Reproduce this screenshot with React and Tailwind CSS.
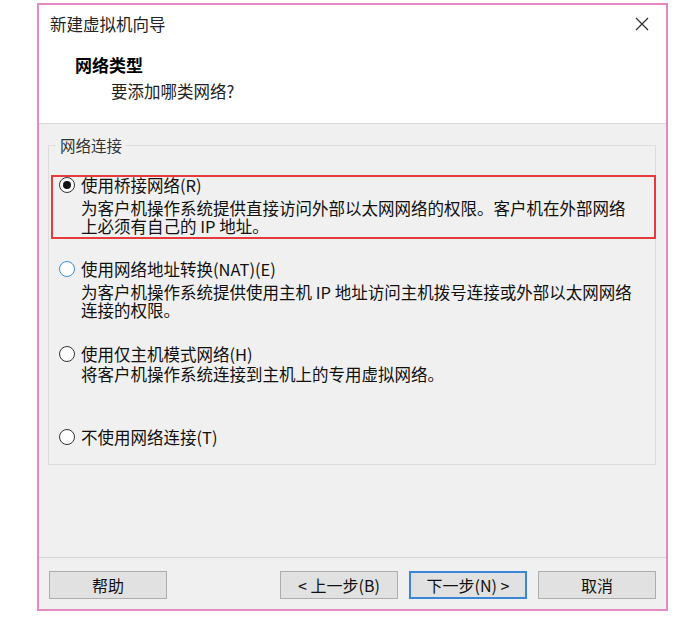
import React from 'react'

function Radio({ checked, focus }) {
  return (
    <span
      className={`flex h-[16px] w-[16px] min-w-[16px] shrink-0 items-center justify-center rounded-full bg-white ${focus ? 'border-[1.5px] border-[#3b8de0]' : 'border-[1.5px] border-[#333]'}`}
    >
      {checked && <span className="h-[8px] w-[8px] rounded-full bg-[#111]" />}
    </span>
  )
}

function Button({ children, primary }) {
  return (
    <button
      className={`h-[28px] w-[118px] bg-[#e1e1e1] text-[16px] leading-[20px] text-[#111] ${primary ? 'border-2 border-[#3c86d8]' : 'border border-[#adadad]'}`}
    >
      {children}
    </button>
  )
}

export default function App() {
  return (
    <div className="min-h-[617px] bg-white pl-[37px] pt-[3px] font-['Noto_Sans_CJK_SC',sans-serif] text-[#111]">
      <div className="flex h-[608px] w-[631px] flex-col border-2 border-[#e38ac5] bg-[#f0f0f0]">
        {/* header */}
        <div className="h-[119px] border-b border-[#dadada] bg-white">
          <div className="box-content flex h-[20px] items-center justify-between pl-[11px] pr-[17px] pt-[9px]">
            <span className="text-[16.5px] leading-[20px] text-[#222]">新建虚拟机向导</span>
            <svg width="14" height="14" viewBox="0 0 14 14">
              <path d="M1 1L13 13M13 1L1 13" stroke="#333" strokeWidth="1.3" />
            </svg>
          </div>
          <div className="mt-[20px] pl-[36px] text-[17px] font-bold leading-[22px] text-black">网络类型</div>
          <div className="mt-[5px] pl-[72px] text-[16.5px] leading-[20px] text-[#222]">要添加哪类网络?</div>
        </div>

        {/* body */}
        <div className="flex-1">
          <fieldset className="ml-[9px] mr-[10px] mt-[11px] h-[330px] border border-[#dcdcdc]">
            <legend className="ml-[7px] px-[4px] text-[15.5px] leading-[20px] text-[#333]">网络连接</legend>

            <div className="ml-[2px] mr-[-1px] mt-[20px] border-2 border-[#e53b3b] pb-[2px] pl-[6px] text-[16.5px]">
              <div className="flex h-[16px] items-center gap-[6px] leading-[16px]">
                <Radio checked />
                <span>使用桥接网络(R)</span>
              </div>
              <div className="mt-[6px] pl-[22px] leading-[18px]">
                <div>为客户机操作系统提供直接访问外部以太网网络的权限。客户机在外部网络</div>
                <div>上必须有自己的 IP 地址。</div>
              </div>
            </div>

            <div className="pl-[10px] text-[16.5px]">
              <div className="mt-[22px] flex h-[16px] items-center gap-[6px] leading-[16px]">
                <Radio focus />
                <span>使用网络地址转换(NAT)(E)</span>
              </div>
              <div className="mt-[6px] pl-[22px] leading-[18px]">
                <div>为客户机操作系统提供使用主机 IP 地址访问主机拨号连接或外部以太网网络</div>
                <div>连接的权限。</div>
              </div>

              <div className="mt-[27px] flex h-[16px] items-center gap-[6px] leading-[16px]">
                <Radio />
                <span>使用仅主机模式网络(H)</span>
              </div>
              <div className="mt-[3px] pl-[22px] leading-[18px]">将客户机操作系统连接到主机上的专用虚拟网络。</div>

              <div className="mt-[46px] flex h-[16px] items-center gap-[6px] leading-[16px]">
                <Radio />
                <span>不使用网络连接(T)</span>
              </div>
            </div>
          </fieldset>
        </div>

        {/* footer */}
        <div className="flex border-t border-[#d5d5d5] px-[10px] pb-[10px] pt-[13px]">
          <Button>帮助</Button>
          <div className="ml-auto flex gap-[11px]">
            <Button>&lt; 上一步(B)</Button>
            <Button primary>下一步(N) &gt;</Button>
            <Button>取消</Button>
          </div>
        </div>
      </div>
    </div>
  )
}
